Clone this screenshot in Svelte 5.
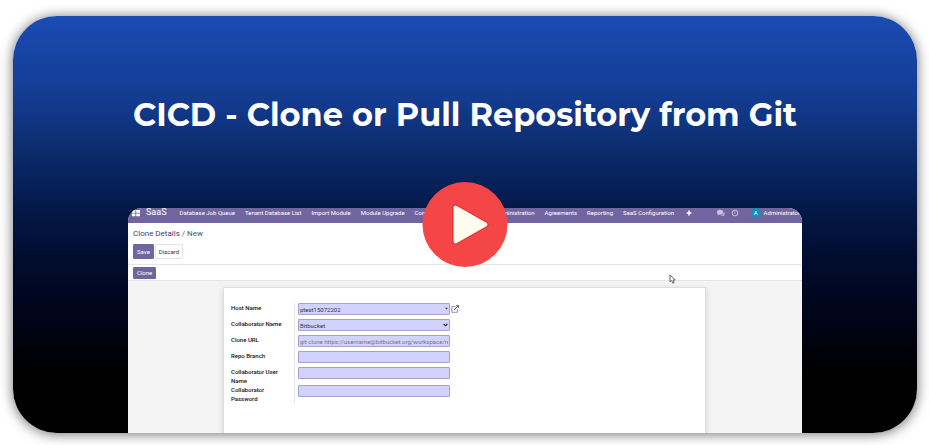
<script>
  const menu = [
    'Database Job Queue',
    'Tenant Database List',
    'Import Module',
    'Module Upgrade',
    'Configuration',
    'SaaS Tenant Administration',
    'Agreements',
    'Reporting',
    'SaaS Configuration'
  ];
  let host = $state('ptest15072202');
  let provider = $state('Bitbucket');
</script>

<section class="card">
  <h1>CICD - Clone or Pull Repository from Git</h1>
  <div class="stage">
    <div class="screen">
      <nav>
        <svg class="apps" viewBox="0 0 8 8" aria-hidden="true">
          <path d="M0 1h3.4v2.8H0zM4.2 1H8v2.8H4.2zM0 4.5h3.4v2.8H0zM4.2 4.5H8v2.8H4.2z" fill="#fff" />
        </svg>
        <a class="brand" href="#saas">SaaS</a>
        <div class="menu">
          {#each menu as item}
            <a href="#menu">{item}</a>
          {/each}
          <svg class="plus" viewBox="0 0 6 6" aria-hidden="true">
            <path d="M3 .6v4.8M.6 3h4.8" stroke="#fff" stroke-width="1.6" />
          </svg>
        </div>
        <svg class="tray" viewBox="0 0 8 8" aria-hidden="true">
          <ellipse cx="3" cy="3.2" rx="3" ry="2.4" fill="#c9c4dd" />
          <path d="M1 4.5.6 6.4 3 5.2z" fill="#c9c4dd" />
          <path d="M6.6 3a2 2 0 0 1 .5 3l.6 1.3-1.8-.6a3 3 0 0 1-2.6-.5C5.2 6 6.4 5 6.6 3z" fill="#b5afd0" />
        </svg>
        <svg class="tray" viewBox="0 0 8 8" aria-hidden="true">
          <circle cx="4" cy="4" r="2.9" fill="none" stroke="#c9c4dd" />
          <path d="M4 2.3V4.2H2.9" fill="none" stroke="#c9c4dd" stroke-width=".7" />
        </svg>
        <span class="avatar">A</span>
        <a class="user" href="#user">Administrator</a>
      </nav>

      <header>
        <div class="crumbs"><a href="#clone">Clone Details</a> / New</div>
        <div class="actions">
          <button class="primary">Save</button>
          <button class="plain">Discard</button>
        </div>
      </header>
      <div class="status"><button class="primary">Clone</button></div>

      <div class="backdrop">
        <form class="sheet">
          <div class="row">
            <label for="host">Host Name</label>
            <div class="field">
              <input id="host" bind:value={host} />
              <svg class="caret" viewBox="0 0 4 3" aria-hidden="true"><path d="M0 .5h4L2 2.8z" fill="#444" /></svg>
            </div>
            <svg class="external" viewBox="0 0 8 8" aria-hidden="true">
              <path d="M4.6 1.6H.9v5.7h5.4V4" fill="none" stroke="#77728f" stroke-width=".8" />
              <path d="M2.8 5.2 6.6 1.4" stroke="#55506f" />
              <path d="M4.8.2H8v3.2z" fill="#55506f" />
            </svg>
          </div>
          <div class="row">
            <label for="provider">Collaborator Name</label>
            <div class="field">
              <select id="provider" bind:value={provider}>
                <option>Bitbucket</option>
                <option>GitHub</option>
              </select>
              <svg class="chevron" viewBox="0 0 5 4" aria-hidden="true">
                <path d="m.6.8 1.9 2L4.4.8" fill="none" stroke="#111" stroke-width="1.1" />
              </svg>
            </div>
          </div>
          <div class="row">
            <label for="url">Clone URL</label>
            <div class="field">
              <input id="url" placeholder="git clone https://username@bitbucket.org/workspace/repo_name.git" />
            </div>
          </div>
          <div class="row">
            <label for="branch">Repo Branch</label>
            <div class="field"><input id="branch" /></div>
          </div>
          <div class="row tall">
            <label for="login">Collaborator User Name</label>
            <div class="field"><input id="login" /></div>
          </div>
          <div class="row tall">
            <label for="password">Collaborator Password</label>
            <div class="field"><input id="password" type="password" /></div>
          </div>
        </form>
      </div>

      <svg class="pointer" viewBox="0 0 7 10" aria-hidden="true">
        <path d="M1 .8v7l1.7-1.4 1.2 2.8 1.3-.6L4.1 6h2.1z" fill="#fff" stroke="#555" stroke-width=".9" />
      </svg>
    </div>
    <button class="play" aria-label="Play video">
      <svg viewBox="0 0 85 85" aria-hidden="true">
        <path
          d="M33 25.5v34L63 42.5z"
          fill="#fffcf0"
          stroke="#e5262b"
          stroke-width="6"
          stroke-linejoin="round"
        />
        <path d="M33 25.5v34L63 42.5z" fill="#fffcf0" stroke="#fffcf0" stroke-width="4" stroke-linejoin="round" />
      </svg>
    </button>
  </div>
</section>

<style>
  :global(body) {
    margin: 0;
    background: #fff;
  }
  .card {
    box-sizing: border-box;
    margin: 16px 12px 12px 13px;
    padding: 75px 115px 0;
    border-radius: 44px;
    background: linear-gradient(
      #1a4cb4 0%,
      #133b90 20%,
      #0a2968 34%,
      #041a4b 45%,
      #010c2f 58%,
      #000418 72%,
      #000 86%
    );
    box-shadow: 0 1px 12px 1px rgba(0, 0, 0, 0.5);
  }
  h1 {
    margin: 0 -60px;
    color: #fff;
    font: 700 32px/48px Montserrat, Inter, 'Open Sans', sans-serif;
    text-align: center;
  }
  .stage {
    position: relative;
    padding-top: 69px;
  }
  .screen {
    position: relative;
    overflow: hidden;
    height: 225px;
    border-radius: 14px 14px 0 0;
    background: #fff;
    color: #333;
    font: 6px/9px Roboto, 'Liberation Sans', sans-serif;
  }
  a {
    color: inherit;
    text-decoration: none;
  }
  nav {
    display: flex;
    align-items: center;
    box-sizing: border-box;
    height: 15px;
    padding: 0 2px 6px 4px;
    background: #7165a0;
    color: #fff;
    white-space: nowrap;
  }
  nav svg {
    flex: none;
  }
  .apps {
    width: 8px;
    height: 8px;
  }
  .brand {
    margin: 0 13px 0 6px;
    font-size: 9px;
  }
  .menu {
    display: flex;
    flex: 1;
    align-items: center;
    gap: 10px;
  }
  .plus {
    width: 6px;
    height: 6px;
    margin-left: 2px;
  }
  .tray {
    width: 8px;
    height: 8px;
    margin-right: 6px;
  }
  .avatar {
    width: 10px;
    height: 10px;
    margin: 0 3px 0 6px;
    border-radius: 50%;
    background: #168eba;
    line-height: 10px;
    text-align: center;
  }
  header {
    box-sizing: border-box;
    height: 42px;
    padding: 6px 5px 0;
    border-bottom: 1px solid #e6e6e8;
  }
  .crumbs {
    font-size: 8px;
    line-height: 10px;
    color: #555;
  }
  .crumbs a {
    color: #4a416f;
  }
  .actions {
    display: flex;
    gap: 1px;
    margin-top: 5px;
  }
  button {
    padding: 0 3px;
    border: 1px solid #7165a0;
    border-radius: 1px;
    font: inherit;
    cursor: pointer;
  }
  .actions button {
    height: 15px;
  }
  .primary {
    background: #7165a0;
    color: #fff;
  }
  .plain {
    border-color: #e4e4e8;
    background: #fff;
    color: #333;
  }
  .status {
    display: flex;
    align-items: center;
    box-sizing: border-box;
    height: 16px;
    padding: 0 5px;
    border-bottom: 1px solid #e4e4e6;
  }
  .status button {
    height: 12px;
    line-height: 10px;
  }
  .backdrop {
    box-sizing: border-box;
    height: 152px;
    padding: 6px 96px 0 95px;
    background: #f5f4f5;
  }
  .sheet {
    box-sizing: border-box;
    height: 100%;
    padding: 15px 8px 0 7px;
    border: 1px solid #dedee0;
    border-bottom: 0;
    background: #fff;
    box-shadow: 0 2px 6px rgba(0, 0, 0, 0.14);
  }
  .row {
    display: flex;
    align-items: flex-start;
    height: 16px;
  }
  .row.tall {
    height: 18px;
  }
  label {
    box-sizing: border-box;
    width: 64px;
    height: 100%;
    margin-right: 3px;
    padding-right: 8px;
    border-right: 1px solid #e6e6ea;
    color: #111;
    font-weight: 500;
  }
  .field {
    position: relative;
    width: 152px;
  }
  input,
  select {
    display: block;
    box-sizing: border-box;
    width: 100%;
    height: 12px;
    padding: 0 1px;
    border: 1px solid #a5a1cc;
    border-radius: 1px;
    background: #d2d2ff;
    color: #333;
    font: inherit;
    appearance: none;
  }
  input::placeholder {
    color: #777;
    opacity: 1;
  }
  .caret,
  .chevron {
    position: absolute;
    top: 4px;
    right: 2px;
    width: 5px;
    height: 4px;
    pointer-events: none;
  }
  .caret {
    width: 3px;
    height: 3px;
  }
  .external {
    width: 8px;
    height: 8px;
    margin: 2px 0 0 1px;
  }
  .pointer {
    position: absolute;
    top: 66px;
    left: 541px;
    width: 7px;
    height: 10px;
  }
  .play {
    position: absolute;
    top: 43px;
    left: 50%;
    width: 85px;
    height: 85px;
    padding: 0;
    border: 0;
    border-radius: 50%;
    background: #f44647;
    transform: translateX(-50%);
  }
  .play svg {
    display: block;
    width: 85px;
    height: 85px;
  }
</style>
